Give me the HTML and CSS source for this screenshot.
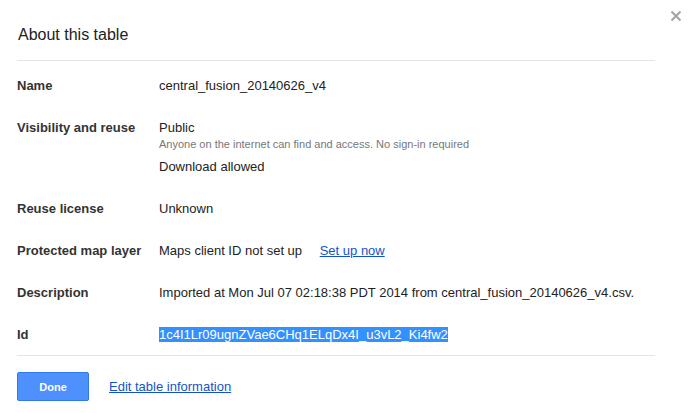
FILE: index.html
```html
<!DOCTYPE html>
<html>
<head>
<meta charset="utf-8">
<link rel="stylesheet" href="styles.css">
</head>
<body>
<div class="dialog">
  <button class="close" aria-label="Close">
    <svg width="12" height="12" viewBox="0 0 12 12"><path d="M1.5 1.5 L10.5 10.5 M10.5 1.5 L1.5 10.5" stroke="#a6a6a6" stroke-width="2.2" fill="none"/></svg>
  </button>
  <div class="header">About this table</div>
  <div class="rows">
    <div class="row">
      <div class="label">Name</div>
      <div class="value">central_fusion_20140626_v4</div>
    </div>
    <div class="row">
      <div class="label">Visibility and reuse</div>
      <div class="value">
        <div>Public</div>
        <div class="note">Anyone on the internet can find and access. No sign-in required</div>
        <div class="extra">Download allowed</div>
      </div>
    </div>
    <div class="row">
      <div class="label">Reuse license</div>
      <div class="value">Unknown</div>
    </div>
    <div class="row">
      <div class="label">Protected map layer</div>
      <div class="value">Maps client ID not set up <a class="link setup" href="#">Set up now</a></div>
    </div>
    <div class="row">
      <div class="label">Description</div>
      <div class="value">Imported at Mon Jul 07 02:18:38 PDT 2014 from central_fusion_20140626_v4.csv.</div>
    </div>
    <div class="row">
      <div class="label">Id</div>
      <div class="value"><span class="selected">1c4I1Lr09ugnZVae6CHq1ELqDx4I_u3vL2_Ki4fw2</span></div>
    </div>
  </div>
  <div class="footer">
    <button class="done">Done</button>
    <a class="link" href="#">Edit table information</a>
  </div>
</div>
</body>
</html>
```
FILE: styles.css
```css
html, body {
  margin: 0;
  padding: 0;
  background: #fff;
}
body {
  font-family: "Liberation Sans", Arial, sans-serif;
  font-size: 13px;
  color: #222;
}
.dialog {
  position: relative;
  padding: 0 36px 0 17px;
}
.close {
  position: absolute;
  top: 10px;
  right: 9px;
  width: 12px;
  height: 12px;
  padding: 0;
  border: 0;
  background: none;
  display: flex;
}
.header {
  font-size: 16px;
  line-height: 20px;
  color: #222;
  padding: 25px 0 15px 1px;
  border-bottom: 1px solid #e5e5e5;
}
.rows {
  display: flex;
  flex-direction: column;
  gap: 26px;
  padding: 17px 0 12px;
  border-bottom: 1px solid #e5e5e5;
}
.row {
  display: flex;
  line-height: 16px;
}
.label {
  width: 142px;
  flex: none;
  font-weight: bold;
  color: #333;
}
.value {
  color: #222;
}
.note {
  font-size: 11px;
  line-height: 14px;
  color: #777;
  margin-top: 1px;
}
.extra {
  margin-top: 8px;
}
.link {
  color: #15c;
  text-decoration: underline;
}
.setup {
  margin-left: 14px;
}
.selected {
  background: #3390ff;
  color: #fff;
}
.footer {
  display: flex;
  align-items: center;
  gap: 20px;
  padding-top: 16px;
}
.done {
  width: 72px;
  height: 29px;
  border: 1px solid #3079ed;
  border-radius: 2px;
  background: #4d90fe;
  color: #fff;
  font-family: "Liberation Sans", Arial, sans-serif;
  font-size: 11px;
  font-weight: bold;
  padding: 0;
}
```
